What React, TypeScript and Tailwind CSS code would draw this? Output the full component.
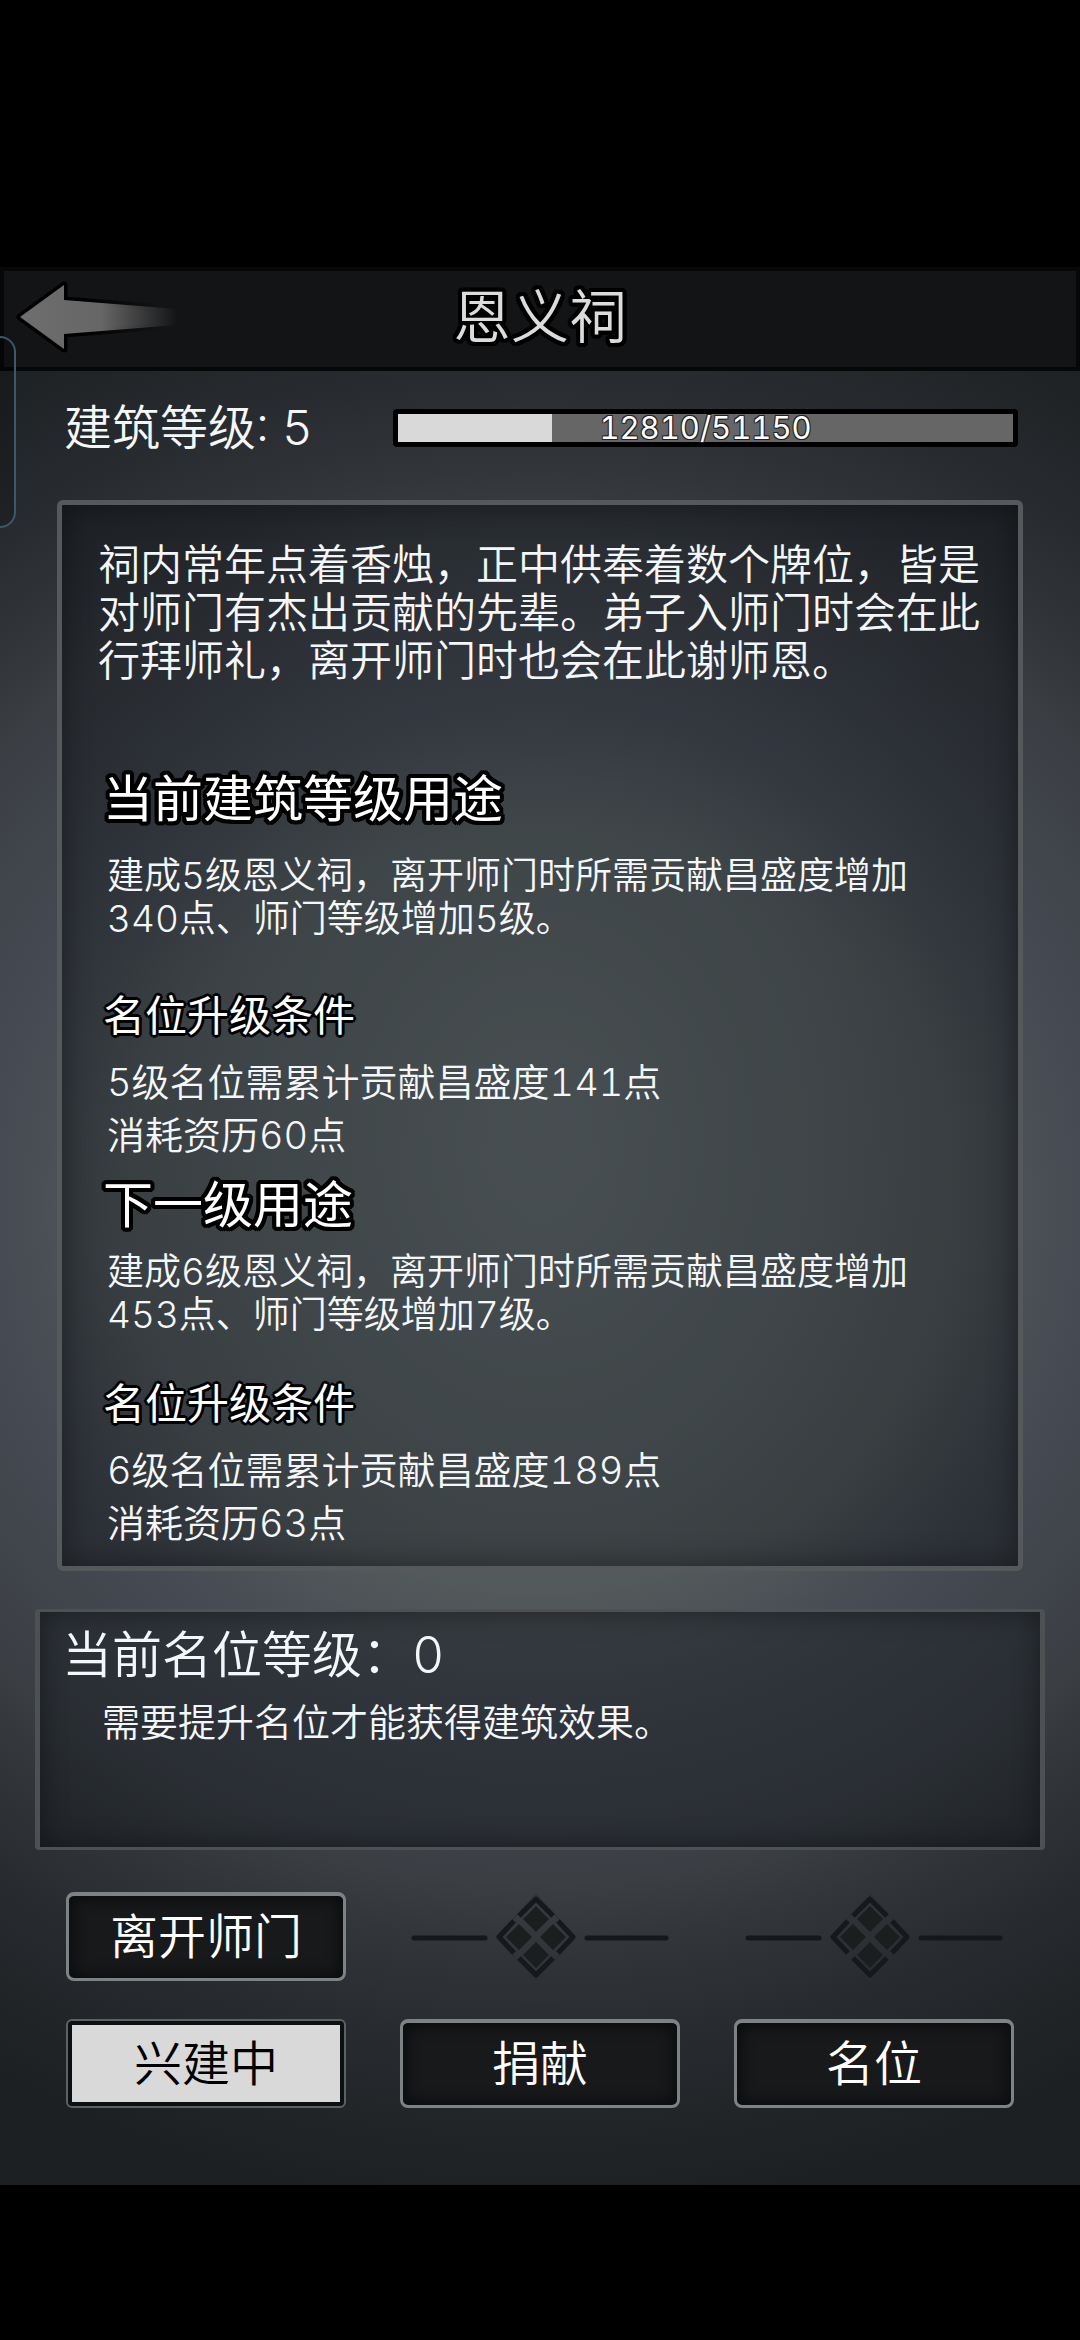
import React from 'react';

const BUILT = 12810;
const NEEDED = 51150;

const sections = [
  {
    title: '当前建筑等级用途',
    effect: '建成5级恩义祠，离开师门时所需贡献昌盛度增加340点、师门等级增加5级。',
    conditions: ['5级名位需累计贡献昌盛度141点', '消耗资历60点'],
    effectGap: 'mt-6',
    conditionGap: 'mt-12',
  },
  {
    title: '下一级用途',
    effect: '建成6级恩义祠，离开师门时所需贡献昌盛度增加453点、师门等级增加7级。',
    conditions: ['6级名位需累计贡献昌盛度189点', '消耗资历63点'],
    effectGap: 'mt-[14px]',
    conditionGap: 'mt-10',
  },
];

// black rings drawn as stacked shadows so the corners stay round
const thickRing =
  '[text-shadow:4px_0_#000,-4px_0_#000,0_4px_#000,0_-4px_#000,3px_3px_#000,-3px_3px_#000,3px_-3px_#000,-3px_-3px_#000,4px_2px_#000,-4px_2px_#000,4px_-2px_#000,-4px_-2px_#000,2px_4px_#000,-2px_4px_#000,2px_-4px_#000,-2px_-4px_#000,2px_0_#000,-2px_0_#000,0_2px_#000,0_-2px_#000]';
const midRing =
  '[text-shadow:3px_0_#000,-3px_0_#000,0_3px_#000,0_-3px_#000,2px_2px_#000,-2px_2px_#000,2px_-2px_#000,-2px_-2px_#000,1px_1px_#000,-1px_-1px_#000]';
const thinRing = '[text-shadow:1px_1px_#222,-1px_1px_#222,1px_-1px_#222,-1px_-1px_#222]';

const BackArrow: React.FC = () => (
  <svg width="170" height="80" viewBox="0 0 170 80" aria-hidden="true">
    <defs>
      <linearGradient id="tail" x1="0" x2="1" y1="0" y2="0">
        <stop offset="0" stopColor="#6e6e6e" />
        <stop offset="0.52" stopColor="#666666" />
        <stop offset="1" stopColor="#666666" stopOpacity="0" />
      </linearGradient>
      <linearGradient id="edge" x1="0" x2="1" y1="0" y2="0">
        <stop offset="0.4" stopColor="#000" />
        <stop offset="0.9" stopColor="#000" stopOpacity="0" />
      </linearGradient>
    </defs>
    <path
      d="M8 40 L52 8 V23 L165 32 V48 L52 57 V72 Z"
      fill="url(#tail)"
      stroke="url(#edge)"
      strokeWidth="7"
      strokeLinejoin="round"
      className="[paint-order:stroke_fill]"
    />
  </svg>
);

const Ornament: React.FC = () => (
  <svg className="w-full" viewBox="0 0 280 90" aria-hidden="true">
    <g stroke="#14181b" strokeWidth="5" strokeLinecap="round">
      <path d="M14 46 H85" />
      <path d="M187 46 H266" />
    </g>
    <path d="M136 2 L176 45 L136 88 L96 45 Z" fill="none" stroke="#2b2f32" strokeWidth="1" />
    <g fill="#1a1e1f">
      <path d="M136 14 L149 27 L136 40 L123 27 Z" />
      <path d="M136 50 L149 63 L136 76 L123 63 Z" />
      <path d="M119 32 L132 45 L119 58 L106 45 Z" />
      <path d="M153 32 L166 45 L153 58 L140 45 Z" />
    </g>
    <g fill="none" stroke="#15191b" strokeWidth="5" strokeLinejoin="round">
      <path d="M119 24 L136 7 L153 24" />
      <path d="M119 66 L136 83 L153 66" />
      <path d="M114 29 L99 45 L114 61" />
      <path d="M158 29 L173 45 L158 61" />
    </g>
  </svg>
);

const GameButton: React.FC<{ label: string }> = ({ label }) => (
  <button
    type="button"
    className="h-[89px] rounded-lg border-3 border-t-4 border-[#7d8284] bg-[#18191b] text-[48px] leading-none text-white shadow-[inset_0_0_14px_4px_#0a0c0e]"
  >
    {label}
  </button>
);

const App: React.FC = () => {
  return (
    <div className="min-h-screen bg-black pt-[267px] font-[Inter,'Noto_Sans_CJK_SC',sans-serif] font-[350] text-[#f4f7f9] tabular-nums">
      <main
        lang="zh-CN"
        className="relative bg-[radial-gradient(105%_55%_at_50%_49%,#575e60_0%,#535a5b_36%,#464a53_48%,#3b3f44_64%,#32353a_70%,#282b2f_79%,#1c2022_95%)] pb-[77px]"
      >
        <header className="relative flex h-[104px] items-center justify-center border-4 border-[#050708] bg-[#131416] pb-1">
          <button type="button" aria-label="返回" className="absolute top-[6px] left-2">
            <BackArrow />
          </button>
          <h1 className={`text-[58px] leading-none text-[#dcdcdc] ${thickRing}`}>恩义祠</h1>
        </header>

        <div className="absolute top-[69px] left-0 h-[192px] w-4 rounded-r-2xl border-2 border-l-0 border-[#3a5a69] bg-black/20" />

        <div className="flex items-center pt-[33px] pr-[62px] pl-16">
          <p className="w-[329px] shrink-0 text-[48px] leading-[48px] whitespace-nowrap">建筑等级: 5</p>
          <div className="relative h-[38px] flex-1 rounded-sm border-5 border-black bg-[#666666]">
            <div className="h-full bg-[#d9d9d9]" style={{ width: `${(BUILT / NEEDED) * 100}%` }} />
            <span className={`absolute inset-0 text-center text-[31px] leading-7 font-normal text-white ${thinRing}`}>
              {BUILT}/{NEEDED}
            </span>
          </div>
        </div>

        <section className="mx-[57px] mt-12 rounded-md border-5 border-[#55595c] bg-[radial-gradient(ellipse_at_50%_58%,rgba(14,20,26,0.2)_0%,rgba(14,20,26,0.3)_40%,rgba(14,18,22,0.45)_80%)] pt-9 pb-4 shadow-[inset_0_0_28px_2px_rgba(0,0,0,0.35)]">
          <p className="px-[36px] text-[42px] leading-[48px]">
            祠内常年点着香烛，正中供奉着数个牌位，皆是对师门有杰出贡献的先辈。弟子入师门时会在此行拜师礼，离开师门时也会在此谢师恩。
          </p>
          <div className="mt-[83px] flex flex-col gap-3 px-[41px]">
            {sections.map((section) => (
              <div key={section.title}>
                <h2 className={`text-[50px] leading-[62px] font-normal text-white ${thickRing}`}>{section.title}</h2>
                <p className={`max-w-[820px] pl-1 text-[37px] leading-[43px] ${section.effectGap}`}>
                  {section.effect}
                </p>
                <h3 className={`text-[42px] leading-[56px] font-normal text-white ${midRing} ${section.conditionGap}`}>
                  名位升级条件
                </h3>
                <ul className="mt-3 pl-1 text-[38px] leading-[53px]">
                  {section.conditions.map((text) => (
                    <li key={text}>{text}</li>
                  ))}
                </ul>
              </div>
            ))}
          </div>
        </section>

        <section className="mx-[35px] mt-[38px] h-[241px] rounded-sm border-x-5 border-y-3 border-[#4d5154] bg-[#0e1418]/40 px-[22px] pt-3 shadow-[inset_0_0_24px_3px_rgba(0,0,0,0.35)]">
          <h2 className="text-[50px] leading-[62px]">当前名位等级：0</h2>
          <p className="mt-2 pl-10 text-[38px] leading-[56px]">需要提升名位才能获得建筑效果。</p>
        </section>

        <div className="mx-[66px] mt-[42px] grid grid-cols-3 gap-x-[54px] gap-y-[37px]">
          <GameButton label="离开师门" />
          <Ornament />
          <Ornament />
          <button
            type="button"
            className="h-[89px] rounded-md border-2 border-[#5c6164] bg-[#0d1012] p-1 text-[48px] leading-none text-black"
          >
            <span className="flex h-full items-center justify-center bg-[#d9d9d9]">兴建中</span>
          </button>
          <GameButton label="捐献" />
          <GameButton label="名位" />
        </div>
      </main>
    </div>
  );
};

export default App;
